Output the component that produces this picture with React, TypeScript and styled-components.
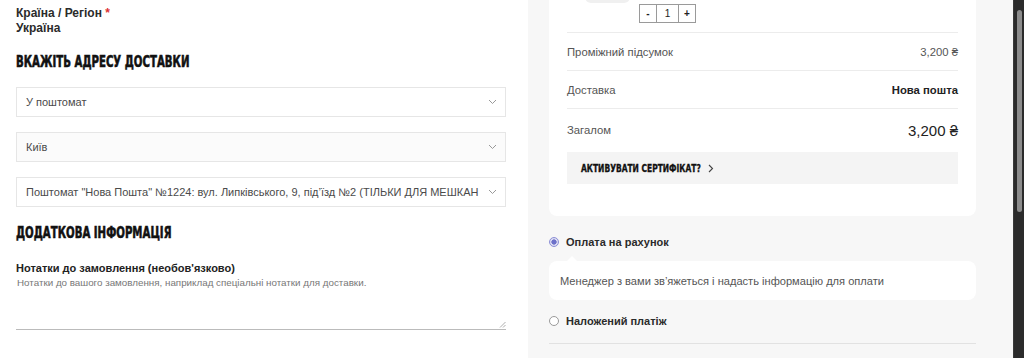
import React from 'react';
import styled, { createGlobalStyle } from 'styled-components';

const GlobalStyle = createGlobalStyle`
  html, body {
    margin: 0;
    padding: 0;
    height: 358px;
    overflow: hidden;
    background: #fff;
    font-family: 'Liberation Sans', Arial, sans-serif;
    color: #222;
  }
  * {
    box-sizing: border-box;
  }
`;

const Page = styled.div`
  display: flex;
  width: 1024px;
  height: 358px;
  overflow: hidden;
`;

const LeftColumn = styled.div`
  width: 528px;
  flex-shrink: 0;
  padding: 6px 22px 0 16px;
  display: flex;
  flex-direction: column;
`;

const RightColumn = styled.div`
  width: 485px;
  flex-shrink: 0;
  background: #f7f7f7;
  padding: 0 37px 0 21px;
  display: flex;
  flex-direction: column;
`;

const Scrollbar = styled.div`
  width: 11px;
  flex-shrink: 0;
  background: #2b2b2b;
  border-left: 1px solid #3a3a3a;
  padding: 10px 2px 0 3px;
`;

const Thumb = styled.div`
  height: 202px;
  border-radius: 4px;
  background: #8c8c8c;
`;

const FieldLabel = styled.div`
  font-size: 12px;
  font-weight: 700;
  color: #2b2b2b;
  line-height: 15px;
`;

const Required = styled.span`
  color: #d33;
`;

const Heading = styled.h2<{ $top: number }>`
  margin: ${(p) => p.$top}px 0 0;
  font-family: 'Liberation Sans Narrow', 'DejaVu Sans Condensed', sans-serif;
  font-weight: 700;
  font-size: 15px;
  line-height: 18px;
  color: #111;
  text-transform: uppercase;
  -webkit-text-stroke: 0.55px #111;
  transform: scaleX(0.755);
  transform-origin: left center;
  white-space: nowrap;
`;

const SelectBox = styled.div<{ $tint?: boolean }>`
  display: flex;
  align-items: center;
  justify-content: space-between;
  gap: 6px;
  height: 30px;
  padding: 0 8px 0 9px;
  border: 1px solid #e6e6e6;
  background: ${(p) => (p.$tint ? '#fbfbfb' : '#fff')};
  font-size: 11px;
  color: #4a4a4a;
  white-space: nowrap;
  overflow: hidden;
`;

const SelectList = styled.div`
  display: flex;
  flex-direction: column;
  gap: 15px;
  margin-top: 16px;
`;

const Chevron = () => (
  <svg width="9" height="6" viewBox="0 0 9 6" fill="none" style={{ flexShrink: 0 }}>
    <path d="M1 1l3.5 3.5L8 1" stroke="#999" strokeWidth="1" />
  </svg>
);

const NotesLabel = styled.div`
  margin-top: 19px;
  font-size: 11px;
  font-weight: 700;
  color: #222;
  line-height: 15px;
`;

const NotesArea = styled.div`
  position: relative;
  height: 54px;
  border-bottom: 1px solid #bbb;
  padding: 0 1px;
  font-size: 9.8px;
  color: #777;
  line-height: 13px;
`;

const ResizeGrip = styled.svg`
  position: absolute;
  right: 0;
  bottom: 1px;
`;

const Card = styled.div`
  background: #fff;
  border-radius: 0 0 8px 8px;
  padding: 0 18px 32px;
  display: flex;
  flex-direction: column;
`;

const ProductStrip = styled.div`
  position: relative;
  height: 33px;
  border-bottom: 1px solid #ececec;
`;

const ThumbEdge = styled.div`
  position: absolute;
  left: 18px;
  top: -6px;
  width: 45px;
  height: 9px;
  border-radius: 0 0 6px 6px;
  background: #f0f0f0;
`;

const Qty = styled.div`
  position: absolute;
  left: 72px;
  top: 4px;
  display: flex;
  height: 19px;
  border: 1px solid #9a9a9a;
`;

const QtyCell = styled.div<{ $w: number; $bold?: boolean }>`
  width: ${(p) => p.$w}px;
  display: flex;
  align-items: center;
  justify-content: center;
  font-size: 10px;
  font-weight: ${(p) => (p.$bold ? 700 : 400)};
  color: #222;
  & + & {
    border-left: 1px solid #9a9a9a;
  }
`;

const SummaryRow = styled.div<{ $h: number; $line?: boolean }>`
  display: flex;
  align-items: center;
  justify-content: space-between;
  height: ${(p) => p.$h}px;
  border-bottom: ${(p) => (p.$line ? '1px solid #ececec' : 'none')};
  font-size: 11.3px;
  color: #555;
`;

const Value = styled.span<{ $size?: number; $bold?: boolean }>`
  font-size: ${(p) => p.$size ?? 11.3}px;
  font-weight: ${(p) => (p.$bold ? 700 : 400)};
  color: ${(p) => (p.$bold || p.$size ? '#222' : '#555')};
`;

const CouponBar = styled.div`
  margin-top: 1px;
  height: 32px;
  background: #f4f4f4;
  display: flex;
  align-items: center;
  padding-left: 14px;
`;

const CouponText = styled.span`
  font-family: 'Liberation Sans Narrow', 'DejaVu Sans Condensed', sans-serif;
  font-weight: 700;
  font-size: 11px;
  color: #111;
  -webkit-text-stroke: 0.35px #111;
  transform: scaleX(0.76);
  transform-origin: left center;
  white-space: nowrap;
  width: 127px;
`;

const PaymentOption = styled.label<{ $top: number }>`
  display: flex;
  align-items: center;
  gap: 7px;
  height: 18px;
  margin-top: ${(p) => p.$top}px;
  font-size: 11px;
  font-weight: 700;
  color: #2b2b2b;
`;

const Radio = styled.span<{ $checked?: boolean }>`
  width: 10px;
  height: 10px;
  border-radius: 50%;
  border: 1px solid ${(p) => (p.$checked ? '#8c8fd6' : '#9a9a9a')};
  background: ${(p) => (p.$checked ? 'radial-gradient(circle, #6d71c9 0 2.4px, #dcdcf2 2.8px)' : '#fff')};
`;

const PaymentList = styled.div`
  display: flex;
  flex-direction: column;
`;

const PaymentNote = styled.div`
  position: relative;
  margin-top: 10px;
  height: 39px;
  background: #fff;
  border-radius: 8px;
  display: flex;
  align-items: center;
  padding-left: 11px;
  font-size: 11.1px;
  color: #555;

  &::before {
    content: '';
    position: absolute;
    left: 18px;
    top: -5px;
    border-left: 5px solid transparent;
    border-right: 5px solid transparent;
    border-bottom: 5px solid #fff;
  }
`;

const Divider = styled.div`
  margin-top: 13px;
  border-top: 1px solid #e2e2e2;
`;

export default function App() {
  return (
    <>
      <GlobalStyle />
      <Page>
        <LeftColumn>
          <FieldLabel>
            Країна / Регіон <Required>*</Required>
          </FieldLabel>
          <FieldLabel>Україна</FieldLabel>
          <Heading $top={17}>Вкажіть адресу доставки</Heading>
          <SelectList>
            <SelectBox>
              <span>У поштомат</span>
              <Chevron />
            </SelectBox>
            <SelectBox $tint>
              <span>Київ</span>
              <Chevron />
            </SelectBox>
            <SelectBox>
              <span>Поштомат "Нова Пошта" №1224: вул. Липківського, 9, під’їзд №2 (ТІЛЬКИ ДЛЯ МЕШКАН</span>
              <Chevron />
            </SelectBox>
          </SelectList>
          <Heading $top={17}>Додаткова інформація</Heading>
          <NotesLabel>Нотатки до замовлення (необов'язково)</NotesLabel>
          <NotesArea>
            Нотатки до вашого замовлення, наприклад спеціальні нотатки для доставки.
            <ResizeGrip width="7" height="7" viewBox="0 0 7 7">
              <path d="M6.5 1L1 6.5M6.5 4L4 6.5" stroke="#999" strokeWidth="0.8" />
            </ResizeGrip>
          </NotesArea>
        </LeftColumn>

        <RightColumn>
          <Card>
            <ProductStrip>
              <ThumbEdge />
              <Qty>
                <QtyCell $w={16} $bold>-</QtyCell>
                <QtyCell $w={22}>1</QtyCell>
                <QtyCell $w={17} $bold>+</QtyCell>
              </Qty>
            </ProductStrip>
            <SummaryRow $h={38} $line>
              <span>Проміжний підсумок</span>
              <Value>3,200 ₴</Value>
            </SummaryRow>
            <SummaryRow $h={38} $line>
              <span>Доставка</span>
              <Value $bold>Нова пошта</Value>
            </SummaryRow>
            <SummaryRow $h={42}>
              <span>Загалом</span>
              <Value $size={15}>3,200 ₴</Value>
            </SummaryRow>
            <CouponBar>
              <CouponText>АКТИВУВАТИ СЕРТИФІКАТ?</CouponText>
              <svg width="6" height="9" viewBox="0 0 6 9" fill="none">
                <path d="M1 1l3.5 3.5L1 8" stroke="#444" strokeWidth="1.1" />
              </svg>
            </CouponBar>
          </Card>

          <PaymentList>
            <PaymentOption $top={17}>
              <Radio $checked />
              Оплата на рахунок
            </PaymentOption>
            <PaymentNote>Менеджер з вами зв’яжеться і надасть інформацію для оплати</PaymentNote>
            <PaymentOption $top={12}>
              <Radio />
              Наложений платіж
            </PaymentOption>
            <Divider />
          </PaymentList>
        </RightColumn>

        <Scrollbar>
          <Thumb />
        </Scrollbar>
      </Page>
    </>
  );
}
